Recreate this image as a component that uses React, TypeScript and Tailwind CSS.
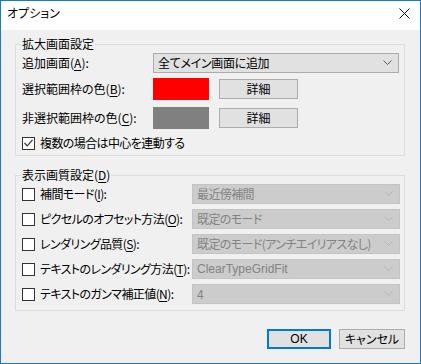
import React from 'react';

const Chevron = ({ color }: { color: string }) => (
  <svg width="9" height="6" viewBox="0 0 9 6" className="shrink-0">
    <path d="M0.5 0.5 L4.5 4.5 L8.5 0.5" fill="none" stroke={color} strokeWidth="1" />
  </svg>
);

const Key = ({ k }: { k: string }) => (
  <>
    (<span className="underline underline-offset-2">{k}</span>)
  </>
);

const Check = ({ checked }: { checked?: boolean }) => (
  <div className="w-[13px] h-[13px] border border-[#333333] bg-white shrink-0 flex items-center justify-center">
    {checked && (
      <svg width="9" height="8" viewBox="0 0 9 8">
        <path d="M0.5 4 L3.2 6.8 L8.5 0.8" fill="none" stroke="#333" strokeWidth="1.2" />
      </svg>
    )}
  </div>
);

const Button = ({ children, w }: { children: React.ReactNode; w: string }) => (
  <div className={`${w} h-[20px] bg-[#e1e1e1] border border-[#adadad] flex items-center justify-center leading-none`}>
    {children}
  </div>
);

const quality = [
  { label: '補間モード', key: 'I', value: '最近傍補間' },
  { label: 'ピクセルのオフセット方法', key: 'O', value: '既定のモード' },
  { label: 'レンダリング品質', key: 'S', value: '既定のモード(アンチエイリアスなし)' },
  { label: 'テキストのレンダリング方法', key: 'T', value: 'ClearTypeGridFit' },
  { label: 'テキストのガンマ補正値', key: 'N', value: '4' }
];

export default function App() {
  return (
    <div className="w-[421px] h-[364px] border border-[#1979ca] bg-[#f0f0f0] flex flex-col text-[12px] text-black whitespace-nowrap [font-feature-settings:'palt'] font-['Noto_Sans_CJK_JP',sans-serif] overflow-hidden">
      {/* title bar */}
      <div className="h-[29px] bg-white flex items-start justify-between shrink-0">
        <div className="pl-[6px] pt-[5px] leading-[14px]">オプション</div>
        <svg width="11" height="11" viewBox="0 0 11 11" className="mt-[7px] mr-[10px]">
          <path d="M0.5 0.5 L10.5 10.5 M10.5 0.5 L0.5 10.5" stroke="#111" strokeWidth="1" />
        </svg>
      </div>

      <div className="flex flex-col pl-[14px] pr-[15px]">
        {/* group 1 */}
        <fieldset className="mt-[7px] border border-[#dcdcdc] pl-[6px] pb-[5px]">
          <legend className="ml-[-1px] px-[1px] leading-[14px]">拡大画面設定</legend>
          <div className="mt-[2px] h-[20px] flex items-center">
            <div className="w-[131px]">追加画面<Key k="A" />:</div>
            <div className="w-[246px] h-[20px] bg-[#e1e1e1] border border-[#acacac] flex items-center justify-between pl-[4px] pr-[6px]">
              <span className="tracking-[-0.3px]">全てメイン画面に追加</span>
              <Chevron color="#555" />
            </div>
          </div>
          <div className="mt-[5px] h-[22px] flex items-center">
            <div className="w-[131px]">選択範囲枠の色<Key k="B" />:</div>
            <div className="w-[56px] h-[22px] bg-[#ff0000]" />
            <div className="ml-[10px]">
              <Button w="w-[79px]">詳細</Button>
            </div>
          </div>
          <div className="mt-[7px] h-[22px] flex items-center">
            <div className="w-[131px]">非選択範囲枠の色<Key k="C" />:</div>
            <div className="w-[56px] h-[22px] bg-[#808080]" />
            <div className="ml-[10px]">
              <Button w="w-[79px]">詳細</Button>
            </div>
          </div>
          <div className="mt-[7px] h-[14px] flex items-center gap-[5px]">
            <Check checked />
            <span className="tracking-[-0.6px]">複数の場合は中心を連動する</span>
          </div>
        </fieldset>

        {/* group 2 */}
        <fieldset className="mt-[12px] border border-[#dcdcdc] pl-[6px] pb-[6px]">
          <legend className="ml-[-1px] px-[1px] leading-[14px]">
            表示画質設定<Key k="D" />
          </legend>
          <div className="mt-[2px] flex flex-col gap-[5px]">
            {quality.map(q => (
              <div key={q.key} className="h-[20px] flex items-center">
                <div className="w-[170px] shrink-0 flex items-center gap-[5px]">
                  <Check />
                  <span className="tracking-[-0.6px]">
                    {q.label}
                    <Key k={q.key} />:
                  </span>
                </div>
                <div className="w-[208px] h-[20px] bg-[#cccccc] border border-[#c4c4c4] text-[#838383] flex items-center justify-between pl-[4px] pr-[6px] overflow-hidden">
                  <span className={q.key === 'T' ? "font-['Liberation_Sans',sans-serif]" : 'tracking-[-0.6px]'}>{q.value}</span>
                  <Chevron color="#b5b5b5" />
                </div>
              </div>
            ))}
          </div>
        </fieldset>

        {/* dialog buttons */}
        <div className="mt-[18px] flex justify-end gap-[8px]">
          <div className="w-[64px] h-[20px] bg-[#e1e1e1] border-2 border-[#0078d7] flex items-center justify-center leading-none font-['Liberation_Sans',sans-serif]">
            OK
          </div>
          <Button w="w-[66px]">キャンセル</Button>
        </div>
      </div>
    </div>
  );
}
